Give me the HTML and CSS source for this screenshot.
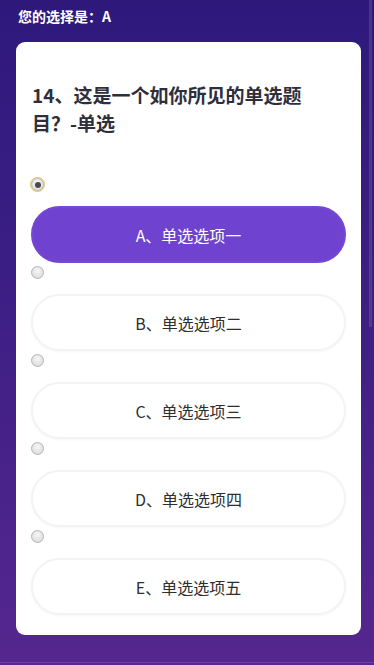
FILE: index.html
```html
<!DOCTYPE html>
<html lang="zh">
<head>
<meta charset="utf-8">
<title>单选题</title>
<link rel="stylesheet" href="styles.css">
</head>
<body>
<div class="page">
  <div class="header">您的选择是：A</div>
  <div class="card">
    <h1 class="title">14、这是一个如你所见的单选题目？-单选</h1>
    <div class="options">
      <div class="option">
        <span class="radio checked"></span>
        <div class="btn active">A、单选选项一</div>
      </div>
      <div class="option">
        <span class="radio"></span>
        <div class="btn">B、单选选项二</div>
      </div>
      <div class="option">
        <span class="radio"></span>
        <div class="btn">C、单选选项三</div>
      </div>
      <div class="option">
        <span class="radio"></span>
        <div class="btn">D、单选选项四</div>
      </div>
      <div class="option">
        <span class="radio"></span>
        <div class="btn">E、单选选项五</div>
      </div>
    </div>
  </div>
</div>
<div class="scroll-thumb"></div>
<div class="bottom-line"></div>
</body>
</html>
```

FILE: styles.css
```css
html, body {
  margin: 0;
  padding: 0;
}
body {
  width: 374px;
  height: 665px;
  overflow: hidden;
  background: linear-gradient(180deg, #2e197b 0%, #3d1f84 45%, #55278f 100%);
  font-family: "Noto Sans CJK SC", "Noto Sans", sans-serif;
  position: relative;
}
.page {
  display: flex;
  flex-direction: column;
}
.header {
  padding: 7px 18px 0;
  line-height: 18px;
  font-size: 14px;
  font-weight: 700;
  color: #ffffff;
}
.card {
  margin: 17px 0 0 16px;
  width: 345px;
  box-sizing: border-box;
  background: #ffffff;
  border-radius: 9px;
  padding: 16px 15px 17px;
}
.title {
  margin: 23px 0 0 1px;
  width: 284px;
  font-size: 19px;
  line-height: 28px;
  font-weight: 700;
  color: #2f2f3c;
}
.options {
  margin-top: 41px;
  display: flex;
  flex-direction: column;
}
.option {
  display: flex;
  flex-direction: column;
  align-items: flex-start;
  padding-bottom: 3px;
}
.radio {
  width: 13px;
  height: 13px;
  box-sizing: border-box;
  border-radius: 50%;
  border: 1px solid #b4b4b4;
  background: radial-gradient(circle at 50% 35%, #f6f6f6 0%, #e0e0e0 70%, #d2d2d2 100%);
  position: relative;
}
.radio.checked {
  outline: 1px solid #e6c377;
  outline-offset: 0px;
  box-shadow: 0 0 0 1px #f6e6bf;
}
.radio.checked::after {
  content: "";
  position: absolute;
  left: 2.5px;
  top: 2.5px;
  width: 6px;
  height: 6px;
  border-radius: 50%;
  background: #4a4a4a;
}
.btn {
  margin-top: 15px;
  width: 315px;
  height: 57px;
  box-sizing: border-box;
  border-radius: 29px;
  border: 2px solid #f3f3f3;
  background: #ffffff;
  box-shadow: 0 1px 3px rgba(0, 0, 0, 0.03);
  display: flex;
  align-items: center;
  justify-content: center;
  font-size: 16px;
  color: #2e2e2e;
}
.btn.active {
  background: #6f43d0;
  border-color: #7448d4;
  color: #ffffff;
  box-shadow: none;
}
.scroll-thumb {
  position: absolute;
  left: 369px;
  top: 0;
  width: 3px;
  height: 327px;
  background: rgba(255, 255, 255, 0.12);
}
.bottom-line {
  position: absolute;
  left: 0;
  top: 662px;
  width: 374px;
  height: 1px;
  background: rgba(255, 255, 255, 0.12);
}
```
